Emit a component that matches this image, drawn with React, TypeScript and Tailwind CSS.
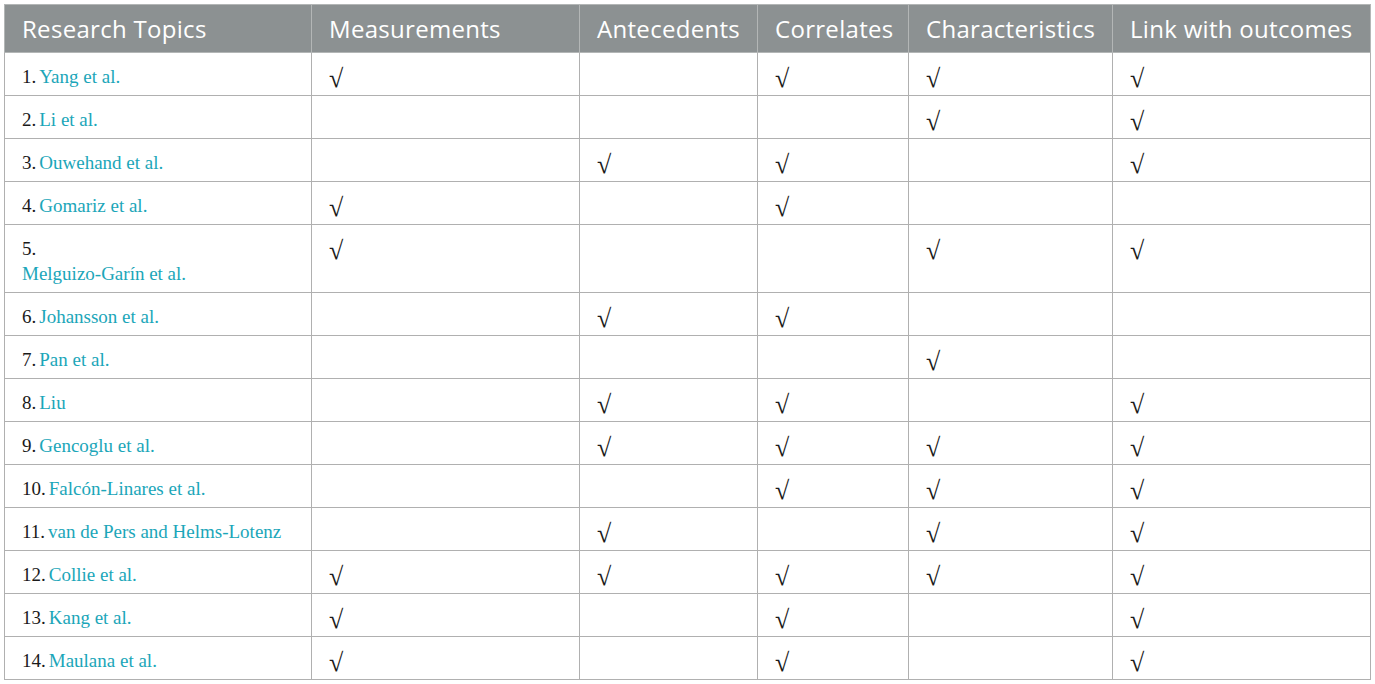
import React from "react";

type Row = { n: number; name: string; marks: boolean[]; wrap?: boolean };

const rows: Row[] = [
  { n: 1, name: "Yang et al.", marks: [true, false, true, true, true] },
  { n: 2, name: "Li et al.", marks: [false, false, false, true, true] },
  { n: 3, name: "Ouwehand et al.", marks: [false, true, true, false, true] },
  { n: 4, name: "Gomariz et al.", marks: [true, false, true, false, false] },
  { n: 5, name: "Melguizo-Garín et al.", marks: [true, false, false, true, true], wrap: true },
  { n: 6, name: "Johansson et al.", marks: [false, true, true, false, false] },
  { n: 7, name: "Pan et al.", marks: [false, false, false, true, false] },
  { n: 8, name: "Liu", marks: [false, true, true, false, true] },
  { n: 9, name: "Gencoglu et al.", marks: [false, true, true, true, true] },
  { n: 10, name: "Falcón-Linares et al.", marks: [false, false, true, true, true] },
  { n: 11, name: "van de Pers and Helms-Lotenz", marks: [false, true, false, true, true] },
  { n: 12, name: "Collie et al.", marks: [true, true, true, true, true] },
  { n: 13, name: "Kang et al.", marks: [true, false, true, false, true] },
  { n: 14, name: "Maulana et al.", marks: [true, false, true, false, true] },
];

const headers = [
  "Research Topics",
  "Measurements",
  "Antecedents",
  "Correlates",
  "Characteristics",
  "Link with outcomes",
];

export default function App() {
  return (
    <div className="bg-white w-[1375px] h-[684px] pt-[4px] pl-[4px]">
      <table className="table-fixed border-collapse w-[1366px]">
        <colgroup>
          <col className="w-[307px]" />
          <col className="w-[268px]" />
          <col className="w-[178px]" />
          <col className="w-[151px]" />
          <col className="w-[204px]" />
          <col className="w-[258px]" />
        </colgroup>
        <thead>
          <tr className="bg-[#8c9192] h-[48px]">
            {headers.map((h) => (
              <th
                key={h}
                className="border border-[#b3b6b6] text-left font-normal text-white text-[24px] tracking-[0.3px] leading-[26px] pl-[17px] pr-0 font-['Open_Sans','Lato',sans-serif] whitespace-nowrap"
              >
                {h}
              </th>
            ))}
          </tr>
        </thead>
        <tbody className="font-['Liberation_Serif','Times_New_Roman',serif] text-[19px] leading-[25px] text-[#1a1a1a]">
          {rows.map((r) => (
            <tr key={r.n}>
              <td className="border border-[#b0b0b0] align-top pl-[17px] pt-[11px] pb-[6px] whitespace-nowrap">
                {r.n}.{r.wrap ? <br /> : null}
                <span className={`text-[#1ba6b9] ${r.wrap ? "" : "ml-[3px]"}`}>{r.name}</span>
              </td>
              {r.marks.map((m, i) => (
                <td
                  key={i}
                  className="border border-[#b0b0b0] align-top pl-[17px] pt-[13px] pb-[4px] text-[26px] leading-[25px]"
                >
                  {m ? "√" : ""}
                </td>
              ))}
            </tr>
          ))}
        </tbody>
      </table>
    </div>
  );
}
